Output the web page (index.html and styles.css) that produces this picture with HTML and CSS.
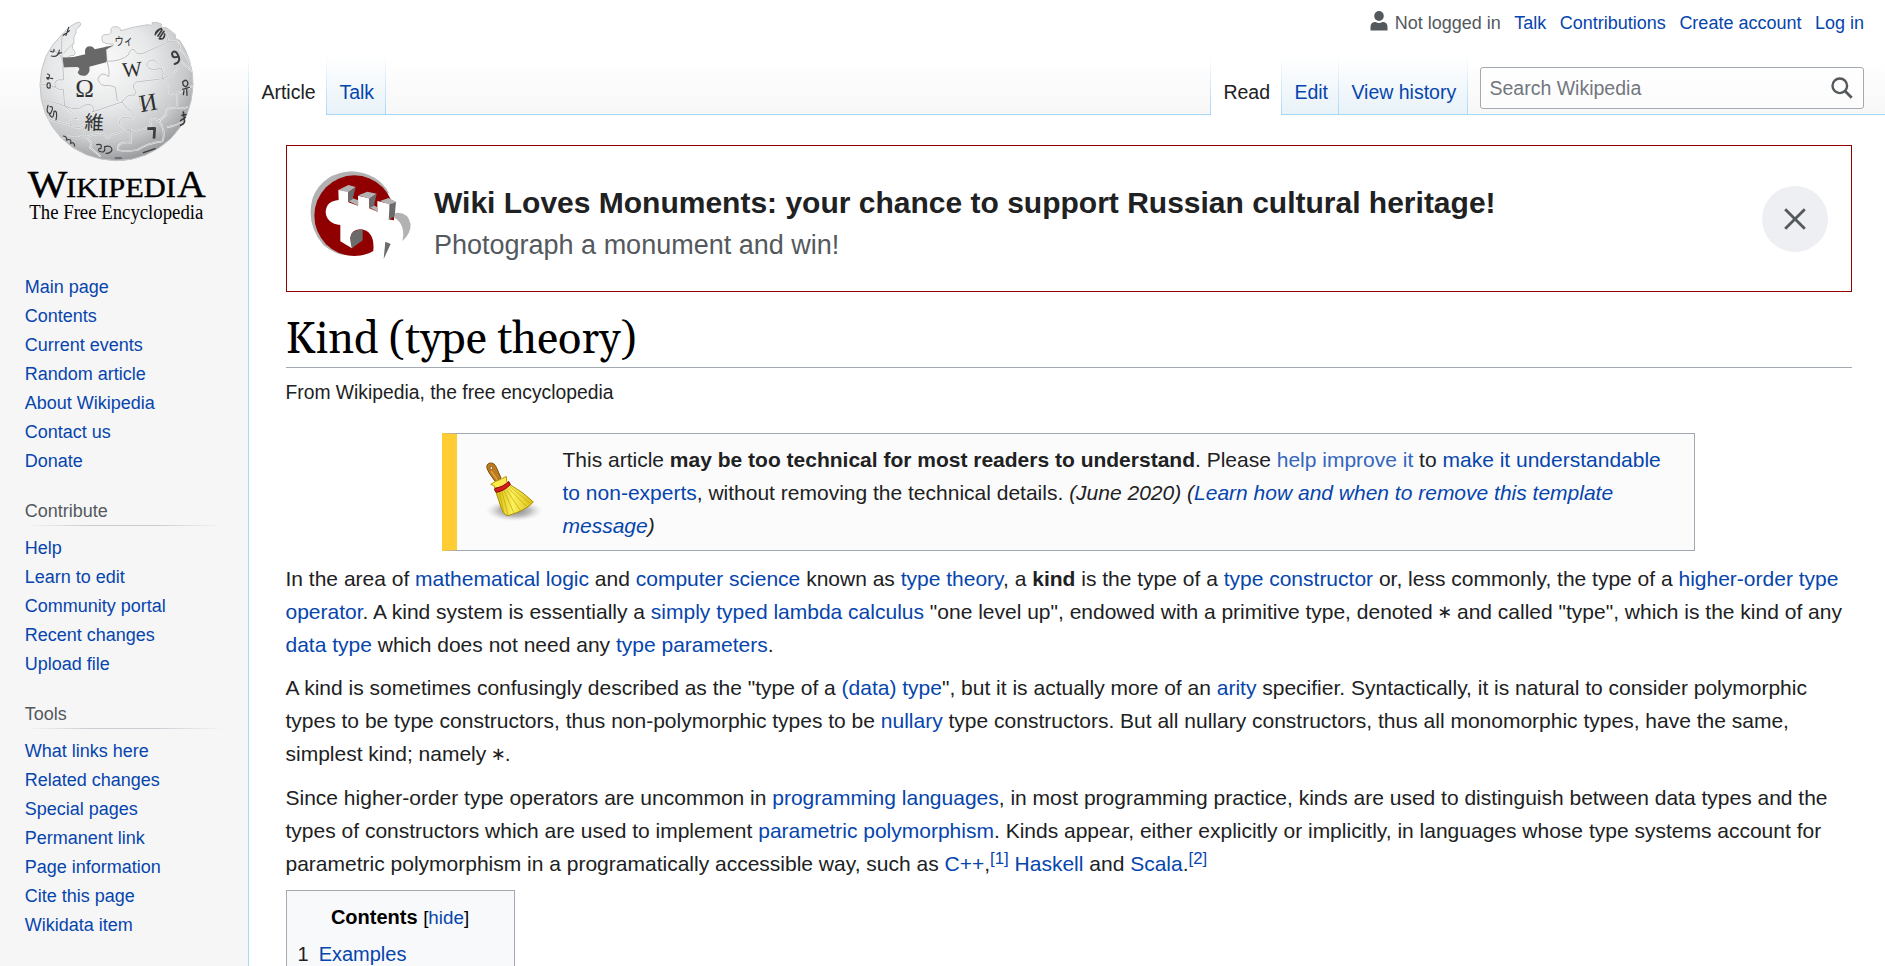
FILE: index.html
```html
<!DOCTYPE html>
<html lang="en">
<head>
<meta charset="utf-8">
<title>Kind (type theory) - Wikipedia</title>
<link rel="stylesheet" href="styles.css">
</head>
<body>
<div class="page">
  <aside class="sidebar">
    <svg class="logo" viewBox="0 0 744 720" width="248" height="240" aria-label="Wikipedia">
      <defs>
        <radialGradient id="globe" cx="0.4" cy="0.3" r="0.75">
          <stop offset="0" stop-color="#fbfbfb"/><stop offset="0.45" stop-color="#e6e7e8"/>
          <stop offset="0.75" stop-color="#c6c8ca"/><stop offset="1" stop-color="#8d8f92"/>
        </radialGradient>
      </defs>
      <path d="M188 102Q212 72 238 66Q246 70 240 78Q224 88 228 98Q218 112 222 128Q214 138 218 146Q230 158 222 166Q196 164 190 202L321 184L318 140Q342 144 340 132Q320 134 308 126Q302 108 312 104Q328 106 334 98Q328 82 344 80Q360 78 362 92Q400 80 444 74Q460 80 456 68Q470 64 484 72Q480 86 496 82Q512 90 526 104Q524 120 538 120Q579 176 579 254Q576 352 512 416Q440 482 350 482Q250 480 184 414Q120 346 120 254Q122 160 188 102Z" fill="url(#globe)" stroke="#c4c6c8" stroke-width="3"/>
      <path d="M188 172Q220 174 256 163Q252 146 262 140Q278 136 284 148L340 136L318 149L321 186L268 200Q272 220 256 227Q238 230 233 217Q244 204 232 201L190 202Z" fill="#686868"/>
      <g fill="none" stroke="#f7f7f7" stroke-width="5"><path id="seams" d="M188 202Q192 220 190 240Q158 234 166 262Q178 272 190 268L194 318Q214 328 236 326Q260 308 276 316Q286 330 276 336L366 306Q382 280 404 286L408 274Q390 256 410 246L488 236Q492 216 484 204Q452 216 440 198Q440 178 464 180L472 190M321 184Q330 216 326 230Q302 210 294 238Q300 262 328 256L346 262L352 304M321 184Q364 184 386 164Q388 148 402 148Q408 166 430 160L504 126Q502 100 486 90M504 126Q540 114 540 148Q570 174 570 204M488 236Q528 220 534 204Q524 190 544 186L578 216M488 236L508 260Q500 294 532 278L530 324Q494 320 498 344L478 362Q454 350 450 366Q462 382 418 390L392 396M418 286L420 314Q446 332 474 306M366 306L382 326Q414 340 396 356Q358 342 358 370Q370 392 392 390L392 428Q350 424 354 450Q374 456 412 450M194 318Q224 342 232 356Q204 352 214 376Q232 390 248 378L256 412Q290 398 314 404Q324 424 332 406Q350 398 392 390M122 254Q142 250 166 262M132 306Q158 302 194 318M144 356Q188 370 214 376M256 412Q282 426 270 442L302 470M188 414Q220 400 256 412M532 278Q558 272 578 256M530 324Q552 328 564 320M500 382Q534 376 552 362M412 450Q440 430 488 424M488 424Q498 392 478 362"/></g>
      <g fill="none" stroke="#b1b3b5" stroke-width="2.5"><use href="#seams"/></g>
      <path d="M188 102Q180 135 190 202M222 128L190 160M150 150Q178 150 188 184" fill="none" stroke="#c6c8ca" stroke-width="3"/>
      <g class="glyphs" fill="#303030">
        <text x="226" y="290" font-size="75">Ω</text>
        <text transform="translate(368 232) rotate(-5)" font-size="63">W</text>
        <text transform="translate(422 337) rotate(-10)" font-size="74">И</text>
        <text class="cjk" transform="translate(253 387) rotate(3)" font-size="58">維</text>
        <text class="cjk" transform="translate(344 137) rotate(-3) scale(.7 .9)" font-size="40">ウィ</text>
      </g>
      <g fill="none" stroke="#3c3c3c" stroke-width="4.5" stroke-linecap="round">
        <path d="M206 82L198 106M190 106L208 92M152 154Q164 160 162 148M154 168Q176 174 178 150M172 162L184 158M142 222Q154 222 144 238Q134 230 148 234L158 236M142 250Q154 244 150 264Q138 266 142 252M144 316Q136 342 152 340Q164 318 150 320M148 342Q160 364 162 334Q174 330 168 360M190 408Q202 410 200 420Q216 414 212 430Q222 424 224 438M290 434Q310 430 302 446Q292 444 298 454Q318 462 314 440Q334 434 336 450Q330 462 318 460M346 474L364 474M430 458L466 446" stroke-width="3.5"/>
        <path d="M466 104Q468 90 484 86M478 116Q494 120 494 102M474 108L486 90M480 112L492 94M466 102L478 88M542 376Q558 370 552 356M542 362L556 352M552 350L550 336M546 346L558 344" stroke-width="5"/>
        <path d="M442 386L464 385L462 416" stroke-width="8" stroke-linejoin="round" stroke-linecap="butt"/>
        <path d="M533 170Q518 176 516 162Q518 150 530 158Q548 186 524 192" stroke-width="6"/>
        <path d="M548 246Q560 234 564 250Q560 266 550 256ZM548 268L568 262M560 268L561 286M552 272L550 284" stroke-width="4"/>
      </g>
      <g class="wordmark">
        <text x="83" y="592" font-size="114" textLength="119" lengthAdjust="spacingAndGlyphs">W</text>
        <text x="198" y="592" font-size="85" textLength="330" lengthAdjust="spacingAndGlyphs">IKIPEDI</text>
        <text x="531" y="592" font-size="114" textLength="86" lengthAdjust="spacingAndGlyphs">A</text>
        <text class="tagline" x="88" y="658" font-size="60" textLength="522" lengthAdjust="spacingAndGlyphs">The Free Encyclopedia</text>
      </g>
    </svg>
    <nav class="portal first">
      <a>Main page</a><a>Contents</a><a>Current events</a><a>Random article</a><a>About Wikipedia</a><a>Contact us</a><a>Donate</a>
    </nav>
    <nav class="portal">
      <h3>Contribute</h3>
      <a>Help</a><a>Learn to edit</a><a>Community portal</a><a>Recent changes</a><a>Upload file</a>
    </nav>
    <nav class="portal">
      <h3>Tools</h3>
      <a>What links here</a><a>Related changes</a><a>Special pages</a><a>Permanent link</a><a>Page information</a><a>Cite this page</a><a>Wikidata item</a>
    </nav>
  </aside>
  <div class="main">
    <header class="head">
      <div class="personal">
        <span class="anon"><svg width="18" height="20" viewBox="0 0 18 20"><ellipse cx="9" cy="5" rx="4.8" ry="5" fill="#54595d"/><path d="M.5 19.5V16Q.5 11 5.5 11Q9 13 12.500 11Q17.500 11 17.500 16V19.500Z" fill="#54595d"/></svg>Not logged in</span>
        <a>Talk</a><a>Contributions</a><a>Create account</a><a>Log in</a>
      </div>
      <div class="tabrow">
        <div class="tabs"><span class="tab active article">Article</span><a class="tab talk">Talk</a></div>
        <div class="tabs right"><span class="tab active read">Read</span><a class="tab edit">Edit</a><a class="tab history">View history</a></div>
        <div class="search"><span>Search Wikipedia</span><svg width="22" height="22" viewBox="0 0 22 22" fill="none" stroke="#54595d"><circle cx="8.800" cy="8.800" r="7.300" stroke-width="2.400"/><path d="M14 14L20.700 20.700" stroke-width="2.800"/></svg></div>
      </div>
    </header>
    <main class="content">
      <section class="banner">
        <svg class="wlm" viewBox="210 390 306 270" width="102" height="90">
          <path d="M335 391Q250 395 218 470Q196 550 250 612Q290 645 325 642L340 404L448 458Q415 396 335 391Z" fill="#b2b2b2"/>
          <ellipse cx="343" cy="524" rx="120" ry="121" fill="#900000"/>
          <path d="M295 447L325 450V484L354 494V464L388 472V502L412 512V480L449 489L450 536Q480 535 493 566Q496 588 486 600L464 612L434 606L431 655L399 640Q404 598 392 582Q382 566 360 565Q334 566 331 590L336 622L301 601V552Q260 548 257 514Q258 480 296 477Z" fill="#fff"/>
          <path d="M466 512L492 566L486 600L430 655L500 655V604L466 512Z" fill="#fff"/>
          <path d="M466 516Q504 512 512 550Q512 580 487 600Q498 552 464 530Z" fill="#b2b2b2"/>
          <path d="M295 447L325 432L347 438L325 454ZM325 480L338 472L355 478V494ZM355 463L382 452L410 458L388 473ZM388 499L400 492L412 499V512ZM420 480L446 471L468 482L449 491Z" fill="#b2b2b2"/>
          <path d="M325 454L347 438L338 474L325 482ZM388 473L410 458L402 494L388 502ZM449 491L468 482L464 526L446 537Z" fill="#6b6b6b"/>
          <path d="M331 590Q334 566 368 565V598L336 622Q330 604 331 590ZM436 602L452 609L431 654Z" fill="#6b6b6b"/>
        </svg>
        <div class="bannertext"><div class="bannertitle">Wiki Loves Monuments: your chance to support Russian cultural heritage!</div><div class="bannersub">Photograph a monument and win!</div></div>
        <span class="close"><svg width="22" height="22" viewBox="0 0 22 22"><path d="M1.200 1.200L20.800 20.800M20.800 1.200L1.200 20.800" stroke="#54595d" stroke-width="2.800"/></svg></span>
      </section>
      <h1>Kind (type theory)</h1>
      <div class="sitesub">From Wikipedia, the free encyclopedia</div>
      <div class="ambox">
        <svg class="broom" viewBox="640 510 180 192" width="60" height="64">
          <defs>
            <radialGradient id="shadow"><stop offset="0" stop-color="#777"/><stop offset=".55" stop-color="#aaa" stop-opacity=".75"/><stop offset="1" stop-color="#ddd" stop-opacity="0"/></radialGradient>
            <linearGradient id="straw"><stop offset="0" stop-color="#d6ba0c"/><stop offset=".45" stop-color="#fcf05c"/><stop offset="1" stop-color="#d9bd10"/></linearGradient>
          </defs>
          <ellipse cx="731" cy="662" rx="86" ry="32" fill="url(#shadow)"/>
          <path d="M649 535Q646 520 660 519Q672 519 677 532L691 564L674 575L655 548Z" fill="#bd7b20" stroke="#7d4b0c" stroke-width="3"/>
          <path d="M661 543L680 570" stroke="#dda044" stroke-width="4"/>
          <circle cx="662" cy="534" r="4" fill="#fff" stroke="#7d4b0c" stroke-width="2"/>
          <path d="M660 583L675 574L692 567L707 559L708 575L718 583L674 603L671 588Z" fill="#fce94f" stroke="#b89a0b" stroke-width="3"/>
          <path d="M675 604Q700 601 718 584Q760 608 788 636Q766 661 712 677Q696 675 688 642Z" fill="url(#straw)" stroke="#a98b08" stroke-width="3"/>
          <path d="M686 606L700 670M694 606L712 674M701 603L730 670M708 600L748 660M714 595L766 648M718 590L778 640" stroke="#c0a10c" stroke-width="2" fill="none"/>
          <path d="M673 595Q698 591 714 574L719 583Q704 602 677 607Q670 602 673 595Z" fill="#d21e1e" stroke="#8a0808" stroke-width="3"/>
        </svg>
        <div class="amboxtext">This article <b>may be too technical for most readers to understand</b>. Please <a class="ext">help improve it</a> to <a>make it understandable<br>to non-experts</a>, without removing the technical details. <i>(June 2020)</i> <i>(<a>Learn how and when to remove this template<br>message</a>)</i></div>
      </div>
      <p>In the area of <a>mathematical logic</a> and <a>computer science</a> known as <a>type theory</a>, a <b>kind</b> is the type of a <a>type constructor</a> or, less commonly, the type of a <a>higher-order type<br>operator</a>. A kind system is essentially a <a>simply typed lambda calculus</a> "one level up", endowed with a primitive type, denoted <span class="star">∗</span> and called "type", which is the kind of any<br><a>data type</a> which does not need any <a>type parameters</a>.</p>
      <p>A kind is sometimes confusingly described as the "type of a <a>(data) type</a>", but it is actually more of an <a>arity</a> specifier. Syntactically, it is natural to consider polymorphic<br>types to be type constructors, thus non-polymorphic types to be <a>nullary</a> type constructors. But all nullary constructors, thus all monomorphic types, have the same,<br>simplest kind; namely <span class="star">∗</span>.</p>
      <p>Since higher-order type operators are uncommon in <a>programming languages</a>, in most programming practice, kinds are used to distinguish between data types and the<br>types of constructors which are used to implement <a>parametric polymorphism</a>. Kinds appear, either explicitly or implicitly, in languages whose type systems account for<br>parametric polymorphism in a programatically accessible way, such as <a>C++</a>,<sup><a>[1]</a></sup> <a>Haskell</a> and <a>Scala</a>.<sup><a>[2]</a></sup></p>
      <div class="toc">
        <div class="toctitle"><b>Contents</b> <span>[<a>hide</a>]</span></div>
        <div class="tocitem"><span>1</span><a>Examples</a></div>
      </div>
    </main>
  </div>
</div>
</body>
</html>
```
FILE: styles.css
```css
* { box-sizing: border-box; }
html, body { margin: 0; height: 100%; overflow: hidden; }
body {
  font-family: "Liberation Sans", Arial, sans-serif;
  color: #202122;
  background: #f6f6f6;
}
a { color: #0645ad; }
svg { display: block; flex: none; }
.page {
  display: flex;
  height: 966px;
  overflow: hidden;
  background: linear-gradient(#fff 50%, #f6f6f6 100%) 0 0 / 100% 120px no-repeat;
}

/* Sidebar */
.sidebar { width: 248px; flex: none; }
.glyphs { font-family: "Liberation Serif", "DejaVu Sans", serif; }
.glyphs .cjk { font-family: "Noto Sans CJK JP", "Noto Sans CJK KR", sans-serif; }
.wordmark { font-family: "Liberation Serif", serif; fill: #000; stroke: #000; stroke-width: 1; }
.tagline { stroke: none; }
.portal { display: flex; flex-direction: column; padding: 0 25px 0 24.75px; font-size: 18px; line-height: 29px; margin-bottom: 20px; }
.portal.first { padding-top: 33px; }
.portal h3 {
  margin: 0 0 8px;
  font-size: 18px;
  font-weight: normal;
  line-height: 30px;
  height: 30px;
  color: #54595d;
  background: linear-gradient(to right, rgba(200,204,209,0), #c8ccd1 33%, #c8ccd1 66%, rgba(200,204,209,0)) 0 100% / 100% 1px no-repeat;
}

/* Header */
.main { flex: 1; min-width: 0; display: flex; flex-direction: column; }
.head {
  height: 115px;
  flex: none;
  display: flex;
  flex-direction: column;
  justify-content: space-between;
  background: linear-gradient(#a7d7f9, #a7d7f9) 0 100% / 100% 1px no-repeat;
}
.personal { display: flex; justify-content: flex-end; gap: 13.5px; padding: 11px 21px 0 0; font-size: 18px; line-height: 24px; }
.anon { display: flex; gap: 7px; color: #54595d; }
.tabrow { display: flex; height: 59px; }
.tabs { display: flex; background: linear-gradient(to bottom, rgba(167,215,249,0), #a7d7f9) 0 0 / 1px 100% no-repeat; padding-left: 1px; }
.tabs.right { margin-left: auto; }
.tab {
  font-size: 19.5px;
  line-height: 22px;
  padding: 25px 0 0 12.4px;
  border-right: 1px solid;
  border-image: linear-gradient(to bottom, rgba(167,215,249,0), #a7d7f9) 1;
  background: linear-gradient(to bottom, #fff 0, #e8f2f8 100%) 0 0 / 100% 58px no-repeat;
  white-space: nowrap;
}
.tab.active { background: #fff; }
.article { width: 78px; }
.talk { width: 59px; }
.read { width: 71px; }
.edit { width: 57px; }
.history { width: 129px; }
.search {
  display: flex;
  align-items: center;
  justify-content: space-between;
  width: 384px;
  height: 42px;
  margin: 11px 21px 0 12px;
  padding: 0 10px 0 8.500px;
  border: 1px solid #a2a9b1;
  border-radius: 3px;
  background: rgba(255,255,255,.5);
  color: #72777d;
  font-size: 19.5px;
}

/* Article */
.content {
  flex: 1;
  min-height: 0;
  border-left: 1px solid #a7d7f9;
  background: #fff;
  padding: 30px 33px 0 36.5px;
  font-size: 21px;
  line-height: 33px;
  white-space: nowrap;
}
.banner { display: flex; align-items: center; height: 147px; border: 1px solid #900000; padding: 0 23px; }
.wlm { margin-top: -6px; }
.bannertext { flex: 1; padding: 10px 0 0 22.5px; }
.bannertitle { font-size: 30px; font-weight: bold; line-height: 42px; }
.bannersub { font-size: 27px; line-height: 42px; color: #54595d; }
.close { width: 66px; height: 66px; border-radius: 50%; background: #eeeff2; display: grid; place-items: center; }
h1 {
  margin: 21px 0 0;
  height: 55px;
  border-bottom: 1px solid #a2a9b1;
  font: normal 43.2px/56px Georgia, Gelasio, "Liberation Serif", serif;
  color: #000;
}
.sitesub { font-size: 19.3px; line-height: 28px; margin-top: 11px; }
.ambox {
  display: flex;
  align-items: center;
  width: 1253px;
  height: 118px;
  margin: 26px 0 11px 156px;
  border: 1px solid #a2a9b1;
  border-left: 15px solid #fc3;
  background: #fbfbfb;
}
.broom { margin: 0 19px 0 27px; }
.ext { color: #36b; }
p { margin: 0 0 10.4px; }
sup { font-size: 16.8px; line-height: 1; vertical-align: 7px; }
.star { font-family: "DejaVu Sans", sans-serif; font-size: 18px; line-height: 0; vertical-align: 1px; margin: 0 -1.250px; }
.toc { width: 229px; height: 100px; border: 1px solid #a2a9b1; background: #f8f9fa; padding: 10px 11px; font-size: 20px; }
.toctitle { text-align: center; color: #000; }
.toctitle span { font-size: 18.8px; }
.tocitem { display: flex; gap: 10px; margin-top: 4px; }
```
